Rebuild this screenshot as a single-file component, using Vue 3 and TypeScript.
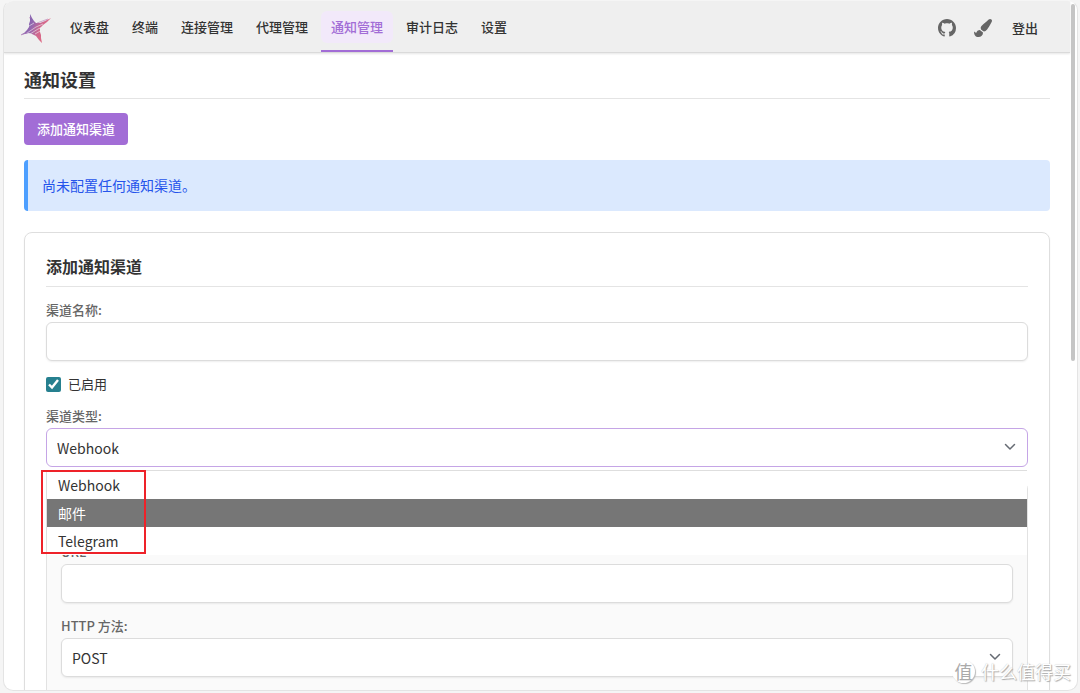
<script setup lang="ts">
import { ref } from 'vue'

interface NavItem {
  label: string
  active?: boolean
}

const navItems: NavItem[] = [
  { label: '仪表盘' },
  { label: '终端' },
  { label: '连接管理' },
  { label: '代理管理' },
  { label: '通知管理', active: true },
  { label: '审计日志' },
  { label: '设置' },
]

const channelTypes = ['Webhook', '邮件', 'Telegram']
const methods = ['POST', 'GET', 'PUT']

const name = ref('')
const enabled = ref(true)
const channelType = ref('Webhook')
const highlighted = ref('邮件')
const url = ref('')
const method = ref('POST')
</script>

<template>
  <div class="window">
    <div class="page">
      <header class="topbar">
        <svg class="logo" viewBox="0 0 30 30" aria-hidden="true">
          <defs>
            <linearGradient id="star" x1="0" y1="0.2" x2="1" y2="0.6">
              <stop offset="0" stop-color="#6d5cb0" />
              <stop offset="0.4" stop-color="#9468b0" />
              <stop offset="0.65" stop-color="#d0688f" />
              <stop offset="1" stop-color="#e86a7c" />
            </linearGradient>
          </defs>
          <path fill="url(#star)" d="M9 1l2 4 2 3 2 2 4 0 5-2 6-3-4 4-4 3-3 3v4l1 3v3l1 5-3-3-3-4-4-2-3-1-4 1-5 1 4-2 3-3 2-3v-3l1-3v-3z" />
          <path stroke="#efefef" fill="none" stroke-width="0.6" d="M6 20l9-6 7-3M9 21l8-5 5-2M14 21l7-4M8 13l5-3" />
          <path stroke="#b479b5" fill="none" stroke-width="0.6" d="M0 22l7-3M16 10l11-4M8 5l2-1" />
        </svg>
        <nav class="nav">
          <a
            v-for="item in navItems"
            :key="item.label"
            href="#"
            class="nav-link"
            :class="{ active: item.active }"
          ><span>{{ item.label }}</span></a>
        </nav>
        <div class="actions">
          <a href="#" class="icon-link" aria-label="GitHub">
            <svg viewBox="0 0 16 16"><path d="M8 0C3.58 0 0 3.58 0 8c0 3.54 2.29 6.53 5.47 7.59.4.07.55-.17.55-.38 0-.19-.01-.82-.01-1.49-2.01.37-2.53-.49-2.69-.94-.09-.23-.48-.94-.82-1.13-.28-.15-.68-.52-.01-.53.63-.01 1.08.58 1.23.82.72 1.21 1.87.87 2.33.66.07-.52.28-.87.51-1.07-1.78-.2-3.64-.89-3.64-3.95 0-.87.31-1.59.82-2.15-.08-.2-.36-1.02.08-2.12 0 0 .67-.21 2.2.82.64-.18 1.32-.27 2-.27s1.36.09 2 .27c1.53-1.04 2.2-.82 2.2-.82.44 1.1.16 1.92.08 2.12.51.56.82 1.27.82 2.15 0 3.07-1.87 3.75-3.65 3.95.29.25.54.73.54 1.48 0 1.07-.01 1.93-.01 2.2 0 .21.15.46.55.38A8.01 8.01 0 0016 8c0-4.42-3.58-8-8-8z" /></svg>
          </a>
          <button type="button" class="icon-link" aria-label="主题">
            <svg viewBox="0 0 512 512"><path d="M167.02 309.34c-40.12 2.58-76.53 17.86-97.19 72.3-2.35 6.21-8 9.98-14.59 9.98-11.11 0-45.46-27.67-55.25-34.35C0 439.62 37.93 512 128 512c75.86 0 128-43.77 128-120.19 0-3.11-.65-6.08-.97-9.13l-88.01-73.34zM457.89 0c-15.16 0-29.37 6.71-40.21 16.45C213.27 199.05 192 203.34 192 257.09c0 13.7 3.25 26.76 8.73 38.7l63.82 53.18c7.21 1.8 14.64 3.03 22.39 3.03 62.11 0 98.11-45.47 211.16-256.46 7.38-14.35 13.9-29.85 13.9-45.99C512 20.64 486 0 457.89 0z" /></svg>
          </button>
          <a href="#" class="logout">登出</a>
        </div>
      </header>

      <main class="content">
        <h1>通知设置</h1>
        <button type="button" class="primary">添加通知渠道</button>
        <p class="notice">尚未配置任何通知渠道。</p>

        <form class="card" @submit.prevent>
          <h2>添加通知渠道</h2>
          <div class="field">
            <label for="name">渠道名称:</label>
            <input id="name" v-model="name" class="control" type="text" />
          </div>
          <label class="check">
            <input v-model="enabled" type="checkbox" />
            <span>已启用</span>
          </label>
          <div class="field">
            <label for="type">渠道类型:</label>
            <div class="select">
              <select id="type" v-model="channelType" class="control focused">
                <option v-for="t in channelTypes" :key="t">{{ t }}</option>
              </select>
              <svg class="chevron" viewBox="0 0 12 8" aria-hidden="true"><path d="M1.5 1.5L6 6l4.5-4.5" /></svg>
              <ul class="options" role="listbox" aria-label="渠道类型">
                <li
                  v-for="t in channelTypes"
                  :key="t"
                  role="option"
                  :aria-selected="t === highlighted"
                  :class="{ highlighted: t === highlighted }"
                  @mouseenter="highlighted = t"
                >{{ t }}</li>
              </ul>
              <div class="marker"></div>
            </div>
          </div>
          <section class="panel">
            <div class="field">
              <label for="url">URL</label>
              <input id="url" v-model="url" class="control" type="text" />
            </div>
            <div class="field">
              <label for="method">HTTP 方法:</label>
              <div class="select">
                <select id="method" v-model="method" class="control">
                  <option v-for="m in methods" :key="m">{{ m }}</option>
                </select>
                <svg class="chevron" viewBox="0 0 12 8" aria-hidden="true"><path d="M1.5 1.5L6 6l4.5-4.5" /></svg>
              </div>
            </div>
          </section>
        </form>
      </main>
    </div>
    <div class="scroll"><div class="thumb"></div></div>
    <div class="watermark"><span class="badge">值</span><span>什么值得买</span></div>
  </div>
</template>

<style>
html,
body {
  margin: 0;
  background: #f5f5f5;
}
</style>

<style scoped>
* {
  box-sizing: border-box;
}

.window {
  position: relative;
  display: flex;
  height: calc(100vh - 2px);
  border: 1px solid #e4e4e4;
  border-top-color: #f5f5f5;
  border-radius: 10px;
  margin: 0 2px 2px 3px;
  overflow: hidden;
  background: #fff;
  color: #333;
  font-family: "Noto Sans CJK SC", sans-serif;
  font-size: 14px;
}

.page {
  flex: 1;
  min-width: 0;
}

.topbar {
  display: flex;
  height: 52px;
  align-items: center;
  padding: 2px 22px 0 17px;
  background: #efefef;
  border-bottom: 1px solid #dadada;
  box-shadow: 0 1px 2px #0000001a;
}

.logo {
  width: 30px;
  height: 30px;
  margin-right: 9px;
}

.nav {
  display: flex;
  align-self: stretch;
  gap: 3px;
}

.nav-link {
  display: flex;
  align-items: center;
  border-bottom: 2px solid transparent;
  color: #333;
  font-size: 13px;
  font-weight: 500;
  text-decoration: none;
}

.nav-link span {
  padding: 0 10px;
  line-height: 32px;
  border-radius: 6px;
}

.nav-link.active {
  color: #a26dd6;
  border-color: #a26dd6;
}

.active span {
  background: #f2e9fa;
}

.actions {
  display: flex;
  flex: 1;
  justify-content: flex-end;
  align-items: center;
  gap: 18px;
  padding-right: 10px;
}

.icon-link {
  display: flex;
  padding: 0;
  border: 0;
  background: none;
  cursor: pointer;
}

.icon-link svg {
  width: 18px;
  height: 18px;
  fill: #666;
}

.logout {
  padding-left: 2px;
  color: #333;
  font-size: 13px;
  font-weight: 500;
  line-height: 18px;
  text-decoration: none;
}

.content {
  padding: 13px 20px 0;
}

h1 {
  margin: 0 0 14px;
  padding-bottom: 5px;
  border-bottom: 1px solid #e4e4e4;
  font-size: 18px;
  font-weight: 700;
  line-height: 27px;
}

.primary {
  display: block;
  padding: 0 13px;
  border: 0;
  border-radius: 4px;
  background: #a26dd6;
  color: #fff;
  font: 500 13px/32px "Noto Sans CJK SC", sans-serif;
  cursor: pointer;
}

.notice {
  margin: 15px 0 21px;
  padding: 0 14px;
  border-left: 4px solid #4d9fff;
  border-radius: 4px;
  background: #dbe9fe;
  color: #2554eb;
  line-height: 51px;
}

.card {
  padding: 21px;
  border: 1px solid #dedede;
  border-radius: 8px;
  box-shadow: 0 1px 2px #0000000d;
}

h2 {
  margin: 0 0 14px;
  padding-bottom: 7px;
  border-bottom: 1px solid #e4e4e4;
  font-size: 16px;
  font-weight: 700;
  line-height: 25px;
}

.field {
  margin-bottom: 14px;
}

.field label {
  display: block;
  color: #666;
  font-size: 13px;
  font-weight: 500;
  line-height: 18px;
  margin-bottom: 3px;
}

.control {
  display: block;
  width: 100%;
  height: 39px;
  padding: 0 10px;
  border: 1px solid #dcdcdc;
  border-radius: 6px;
  outline: 0;
  background: #fff;
  box-shadow: 0 1px 2px #00000012;
  color: #333;
  font: 14px "Noto Sans CJK SC", sans-serif;
  appearance: none;
}

.control.focused {
  border-color: #c5a5e6;
  box-shadow: none;
}

.check {
  display: flex;
  align-items: center;
  gap: 7px;
  margin-bottom: 14px;
  font-size: 13px;
  line-height: 18px;
}

.check input {
  width: 15px;
  height: 15px;
  margin: 0;
  accent-color: #26808f;
}

.select {
  position: relative;
}

.chevron {
  position: absolute;
  top: 15px;
  right: 12px;
  width: 12px;
  height: 8px;
  fill: none;
  stroke: #666b73;
  stroke-width: 1.5;
  stroke-linecap: round;
  stroke-linejoin: round;
  pointer-events: none;
}

.options {
  position: absolute;
  z-index: 1;
  top: 100%;
  left: 0;
  right: 1px;
  margin: 3px 0 0;
  padding: 0;
  border: solid #dedede;
  border-width: 1px 0 0 1px;
  background: #fff;
  line-height: 28px;
  list-style: none;
}

.options li {
  padding: 0 11px;
}

.options .highlighted {
  background: #767676;
  color: #fff;
}

.marker {
  position: absolute;
  z-index: 2;
  top: 100%;
  left: -5px;
  width: 105px;
  height: 84px;
  margin-top: 3px;
  border: 2px solid #ee2229;
  pointer-events: none;
}

.panel {
  padding: 61px 14px 14px;
  border: 1px solid #e2e2e2;
  border-radius: 8px;
  background: #fafafa;
}

.scroll {
  width: 7px;
  padding-top: 3px;
}

.thumb {
  width: 4px;
  height: 52%;
  margin-left: 1px;
  border-radius: 2px;
  background: #c5c5c5;
}

.watermark {
  position: absolute;
  right: 6px;
  bottom: 6px;
  display: flex;
  align-items: center;
  gap: 6px;
  color: #fff;
  font-size: 18px;
  line-height: 26px;
  text-shadow: 1px 1px 1px #aaa, 0 0 1px #bbb;
  pointer-events: none;
}

.badge {
  width: 23px;
  height: 23px;
  border-radius: 50%;
  background: #fff;
  box-shadow: 1px 1px 1px #bbb;
  color: #aaa;
  font-size: 18px;
  line-height: 22px;
  text-align: center;
  text-shadow: none;
}
</style>
